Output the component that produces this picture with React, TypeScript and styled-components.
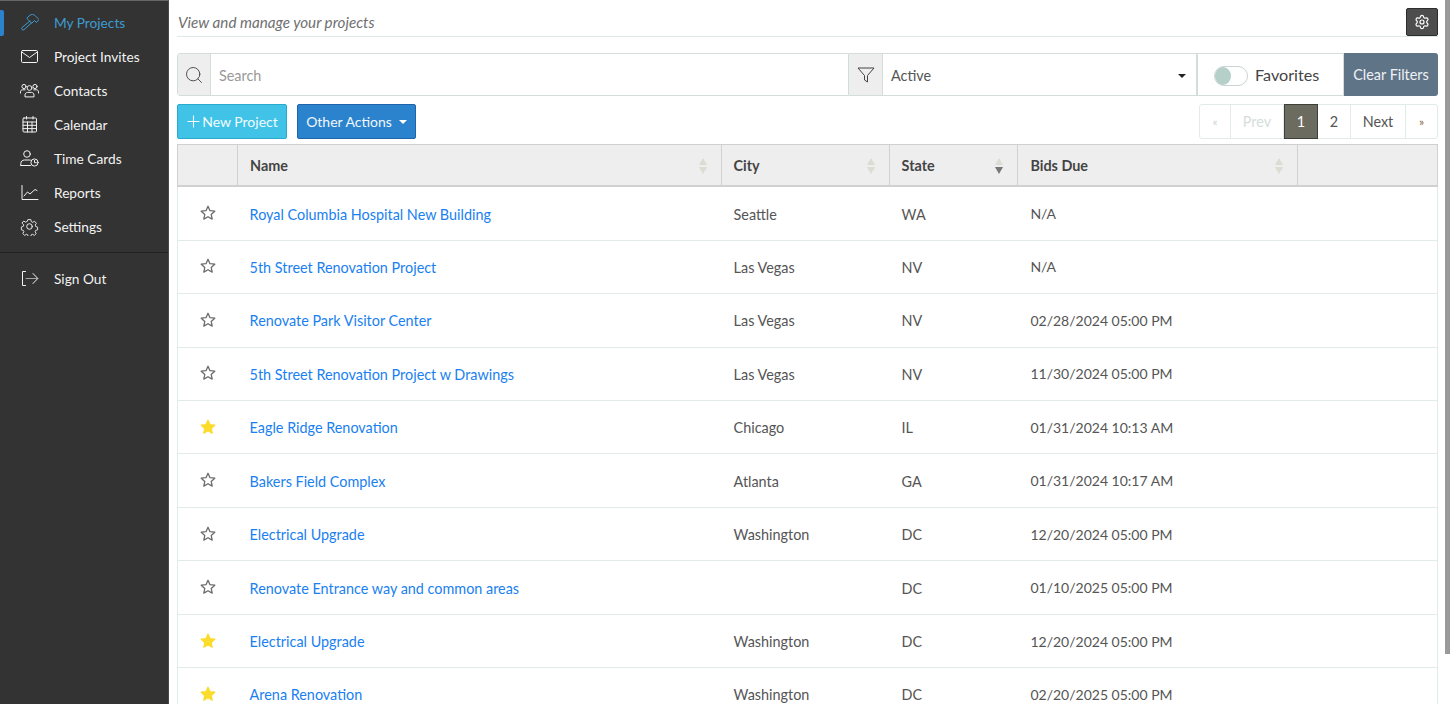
import React from "react";
import styled, { createGlobalStyle } from "styled-components";
import { Settings, Search } from "lucide-react";

const Global = createGlobalStyle`
  html, body { margin: 0; padding: 0; height: 100%; overflow: hidden; background: #fff; }
  body { font-family: Lato, "Liberation Sans", sans-serif; font-size: 14px; color: #444; }
  #root { height: 100vh; }
  * { box-sizing: border-box; }
`;

const Page = styled.div`
  display: flex;
  height: 704px;
  overflow: hidden;
  position: relative;
`;

const Sidebar = styled.nav`
  width: 169px;
  flex: none;
  height: 704px;
  background: #333333;
  border-top: 1px solid #666;
  border-right: 1px solid #4a4a4a;
  padding-top: 4px;
`;

const NavItem = styled.a<{ $active?: boolean }>`
  display: flex;
  align-items: center;
  height: 34px;
  padding-left: 20px;
  gap: 15px;
  color: ${(p) => (p.$active ? "#3d9bd0" : "#f2f2f2")};
  font-size: 13.7px;
  position: relative;
  ${(p) =>
    p.$active &&
    `&::before { content: ""; position: absolute; left: 0; top: 5px; width: 4px; height: 26px; background: #2a83cc; border-radius: 0 2px 2px 0; }`}
`;

const NavIcon = styled.svg`
  width: 19px;
  height: 19px;
  flex: none;
  fill: none;
  stroke: currentColor;
  stroke-width: 1;
  stroke-linecap: round;
  stroke-linejoin: round;
`;

const NavDivider = styled.div`
  border-top: 1px solid #222;
  margin: 9px 0 8px;
`;

const Main = styled.main`
  flex: 1;
  min-width: 0;
  padding: 8px 12px 0 8px;
`;

const TopBar = styled.div`
  display: flex;
  align-items: center;
  justify-content: space-between;
  height: 29px;
  border-bottom: 1px solid #dfe9e6;
`;

const Tagline = styled.span`
  font-style: italic;
  color: #6f6f6f;
  font-size: 15.2px;
  padding: 0 0 1px 1px;
`;

const GearButton = styled.button`
  width: 32px;
  height: 28px;
  background: #4d4d4d;
  border: 1px solid #2d2d2d;
  border-radius: 2px;
  color: #fff;
  display: flex;
  align-items: center;
  justify-content: center;
  padding: 0;
`;

const FilterRow = styled.div`
  display: flex;
  height: 43px;
  margin-top: 16px;
`;

const SearchGroup = styled.div`
  display: flex;
  width: 672px;
  flex: none;
  border: 1px solid #d3dedb;
  border-radius: 3px 0 0 3px;
`;

const SelectGroup = styled.div`
  display: flex;
  width: 348px;
  flex: none;
  border: 1px solid #d3dedb;
  border-left: none;
`;

const Addon = styled.div<{ $width: number }>`
  width: ${(p) => p.$width}px;
  flex: none;
  background: #eeeeee;
  border-right: 1px solid #d3dedb;
  display: flex;
  align-items: center;
  justify-content: center;
  color: #444;
`;

const SearchText = styled.span`
  color: #999;
  font-size: 14.4px;
  padding: 1px 0 0 8px;
  align-self: center;
`;

const SelectBox = styled.div`
  flex: 1;
  display: flex;
  align-items: center;
  justify-content: space-between;
  padding: 2px 10px 0 8px;
  color: #555;
  font-size: 14.4px;
`;

const Caret = styled.span<{ $color: string }>`
  display: inline-block;
  width: 0;
  height: 0;
  border-left: 4px solid transparent;
  border-right: 4px solid transparent;
  border-top: 4px solid ${(p) => p.$color};
`;

const FavoriteBox = styled.div`
  width: 147px;
  flex: none;
  border: 1px solid #d3dedb;
  display: flex;
  align-items: center;
  padding-left: 16px;
  gap: 7px;
  font-size: 16.2px;
  color: #444;
`;

const Toggle = styled.span`
  width: 34px;
  height: 20px;
  border-radius: 10px;
  border: 1px solid #c9d3d1;
  position: relative;
  display: block;
  margin-top: 2px;
  &::after {
    content: "";
    position: absolute;
    left: 0;
    top: 0;
    width: 16px;
    height: 18px;
    border-radius: 50%;
    background: #b5d0c8;
  }
`;

const ClearButton = styled.button`
  width: 94px;
  flex: none;
  background: #607488;
  color: #eef2f5;
  border: none;
  border-radius: 0 3px 3px 0;
  font: inherit;
  font-size: 14.4px;
  padding: 0;
`;

const ActionRow = styled.div`
  display: flex;
  align-items: stretch;
  height: 35px;
  margin-top: 8px;
`;

const NewButton = styled.button`
  background: #41c3e8;
  border: 1px solid #2ba9cc;
  border-radius: 2px;
  color: #f1fbfe;
  width: 110px;
  font: inherit;
  font-size: 14px;
  display: flex;
  align-items: center;
  justify-content: center;
  gap: 0;
  padding: 0;
`;

const PlusIcon = styled.svg`
  width: 16px;
  height: 16px;
  flex: none;
  fill: none;
  stroke: currentColor;
  stroke-width: 1.1;
`;

const OtherButton = styled.button`
  background: #2a83cc;
  border: 1px solid #1f64a8;
  border-radius: 2px;
  color: #f1f7fc;
  width: 119px;
  margin-left: 10px;
  font: inherit;
  font-size: 14px;
  display: flex;
  align-items: center;
  justify-content: center;
  gap: 7px;
  padding: 0;
`;

const Pager = styled.div`
  margin-left: auto;
  display: flex;
  border: 1px solid #e1ebe8;
  border-radius: 3px;
`;

const PageCell = styled.span<{ $w: number; $state?: "off" | "on" }>`
  width: ${(p) => p.$w}px;
  display: flex;
  align-items: center;
  justify-content: center;
  font-size: 14.4px;
  border-right: 1px solid #e1ebe8;
  color: ${(p) => (p.$state === "off" ? "#d5dedb" : p.$state === "on" ? "#fff" : "#555")};
  ${(p) =>
    p.$state === "on" &&
    "background: #6b6b60; outline: 1px solid #3f3f3a; outline-offset: -1px; margin: -1px 0; border: none;"}
  &:last-child { border-right: none; }
`;

const SmallGlyph = styled.span<{ $muted?: boolean }>`
  font-size: 12px;
  color: ${(p) => (p.$muted ? "#ccd6d3" : "#8a6d3b")};
`;

const Table = styled.div`
  margin-top: 5px;
  border-left: 1px solid #e1ebe8;
  border-right: 1px solid #e1ebe8;
`;

const COLS = "60px 483.6px 168px 128.8px 280px 1fr";

const HeadRow = styled.div`
  display: grid;
  grid-template-columns: ${COLS};
  height: 43.3px;
  background: #eeeeee;
  border: 1px solid #d0d0d0;
  border-bottom-width: 2px;
  margin: 0 -1px;
`;

const HeadCell = styled.div`
  display: flex;
  align-items: center;
  justify-content: space-between;
  padding: 1px 13px 0 12px;
  font-weight: 700;
  font-size: 14.4px;
  color: #444;
  border-right: 1px solid #d0d0d0;
  &:last-child { border-right: none; }
`;

const SortIcon = styled.svg`
  width: 10px;
  height: 18px;
  flex: none;
  margin-top: 1px;
`;

const Row = styled.div`
  display: grid;
  grid-template-columns: ${COLS};
  height: 53.44px;
  border-bottom: 1px solid #e1ebe8;
  align-items: center;
  font-size: 14.4px;
  color: #555;
`;

const StarCell = styled.div`
  display: flex;
  justify-content: center;
  margin: -1px 0 0 -1px;
`;

const TextCell = styled.div`
  padding: 1px 12px 0;
  white-space: nowrap;
`;

const NameCell = styled(TextCell)`
  padding-left: 11.6px;
`;

const DateCell = styled(TextCell)`
  font-size: 14px;
  padding-top: 0;
`;

const ProjectLink = styled.a`
  color: #1a7ff0;
`;

const Scrollbar = styled.div`
  position: absolute;
  right: 0;
  top: 0;
  width: 5px;
  height: 654px;
  background: #9a9a9a;
`;

const StarPath = "M8 1.3l2 4.4 4.8.5-3.6 3.2 1 4.7L8 11.7l-4.2 2.4 1-4.7L1.2 6.2 6 5.700z";

const StarIcon = ({ on }: { on: boolean }) => (
  <svg width="16" height="16" viewBox="0 0 16 16">
    <path
      d={StarPath}
      fill={on ? "#fbdc2c" : "none"}
      stroke={on ? "#fbdc2c" : "#6b6b6b"}
      strokeWidth="1.3"
      strokeLinejoin="round"
    />
  </svg>
);

const Sort = ({ down }: { down?: boolean }) => (
  <SortIcon viewBox="0 0 10 18">
    <path d="M5 1 L9 8 H1 Z" fill="#dcdcd4" />
    <path d="M5 17 L9 10 H1 Z" fill={down ? "#777" : "#dcdcd4"} />
  </SortIcon>
);

const navItems: { label: string; icon: React.ReactNode; active?: boolean }[] = [
  {
    label: "My Projects",
    active: true,
    icon: (
      <>
        <path d="M10 8 2 14.500a1.500 1.500 0 0 0 2 2.200L11.500 10" />
        <path d="M7 5 10 2.200c1.500-1 3.500-1 5 .3l4 4-2.500 3-2-2L12 10z" />
      </>
    ),
  },
  {
    label: "Project Invites",
    icon: (
      <>
        <rect x="1.500" y="3.500" width="16" height="12" rx="1.200" />
        <path d="M1.800 5 9.500 10.500 17.200 5" />
      </>
    ),
  },
  {
    label: "Contacts",
    icon: (
      <>
        <circle cx="4" cy="5.500" r="2.100" />
        <circle cx="9.500" cy="7" r="2.400" />
        <circle cx="15" cy="5.500" r="2.100" />
        <path d="M.5 12v-1.200c0-1.300 1-2 2-2h2.700M18.500 12v-1.200c0-1.300-1-2-2-2h-2.700" />
        <path d="M5 15.500V14c0-1.500 1.200-2.600 2.600-2.600h3.800c1.400 0 2.600 1.100 2.600 2.600v1.500z" />
      </>
    ),
  },
  {
    label: "Calendar",
    icon: (
      <>
        <rect x="3" y="3" width="13.500" height="14" rx="1" />
        <path d="M3 7h13.500M3 10.300h13.500M3 13.600h13.500M7.500 7v10M12 7v10M6.500 1.500V4M13 1.500V4" />
      </>
    ),
  },
  {
    label: "Time Cards",
    icon: (
      <>
        <circle cx="7" cy="5" r="3.300" />
        <path d="M.8 16.500v-2c0-2 1.600-3.500 3.500-3.500h5.200c.6 0 1.200.2 1.700.4M.8 16.500h9.700" />
        <circle cx="14.500" cy="13.500" r="3.600" />
        <path d="M14.500 11.500v2.200h1.800" />
      </>
    ),
  },
  {
    label: "Reports",
    icon: (
      <>
        <path d="M2 2.500V16.500H18" />
        <path d="M4 13l3.500-4 2.500 2 5-4.500 2 1" />
      </>
    ),
  },
  {
    label: "Settings",
    icon: (
      <>
        <circle cx="9.500" cy="9.500" r="2.800" />
        <path d="M8 1.800h3l.5 2.300 1.500.7 2.100-1.200 2 2.300-1.300 1.900.5 1.600 2.200.8v2.900l-2.200.7-.6 1.500 1.200 2-2.100 2-1.900-1.200-1.600.6-.5 2.300H8l-.5-2.300-1.500-.6-1.900 1.200-2.100-2 1.200-2-.6-1.500-2.200-.7V10l2.200-.8.500-1.600L1 5.700l2-2.300 2.100 1.200 1.500-.7z" transform="translate(1 1) scale(0.9)" />
      </>
    ),
  },
];

const rows = [
  { name: "Royal Columbia Hospital New Building", city: "Seattle", state: "WA", due: "N/A", fav: false },
  { name: "5th Street Renovation Project", city: "Las Vegas", state: "NV", due: "N/A", fav: false },
  { name: "Renovate Park Visitor Center", city: "Las Vegas", state: "NV", due: "02/28/2024 05:00 PM", fav: false },
  { name: "5th Street Renovation Project w Drawings", city: "Las Vegas", state: "NV", due: "11/30/2024 05:00 PM", fav: false },
  { name: "Eagle Ridge Renovation", city: "Chicago", state: "IL", due: "01/31/2024 10:13 AM", fav: true },
  { name: "Bakers Field Complex", city: "Atlanta", state: "GA", due: "01/31/2024 10:17 AM", fav: false },
  { name: "Electrical Upgrade", city: "Washington", state: "DC", due: "12/20/2024 05:00 PM", fav: false },
  { name: "Renovate Entrance way and common areas", city: "", state: "DC", due: "01/10/2025 05:00 PM", fav: false },
  { name: "Electrical Upgrade", city: "Washington", state: "DC", due: "12/20/2024 05:00 PM", fav: true },
  { name: "Arena Renovation", city: "Washington", state: "DC", due: "02/20/2025 05:00 PM", fav: true },
];

export default function App() {
  return (
    <Page>
      <Global />
      <Sidebar>
        {navItems.map((n) => (
          <NavItem key={n.label} $active={n.active}>
            <NavIcon viewBox="0 0 19 19">{n.icon}</NavIcon>
            {n.label}
          </NavItem>
        ))}
        <NavDivider />
        <NavItem>
          <NavIcon viewBox="0 0 19 19">
            <path d="M5.500 2.500H2.500V16.500H5.500" />
            <path d="M6 9.500H17.500" strokeOpacity="0.6" />
            <path d="M13 4.500l4.800 5-4.800 5" />
          </NavIcon>
          Sign Out
        </NavItem>
      </Sidebar>
      <Main>
        <TopBar>
          <Tagline>View and manage your projects</Tagline>
          <GearButton>
            <Settings size={16} strokeWidth={1.8} />
          </GearButton>
        </TopBar>
        <FilterRow>
          <SearchGroup>
            <Addon $width={33}>
              <Search size={20} strokeWidth={1.1} />
            </Addon>
            <SearchText>Search</SearchText>
          </SearchGroup>
          <SelectGroup>
            <Addon $width={34}>
              <svg width="18" height="18" viewBox="0 0 18 18" fill="none" stroke="#444" strokeWidth="1" strokeLinejoin="round">
                <path d="M1 2H17L10.500 9.500V16L7.500 14V9.500Z" />
              </svg>
            </Addon>
            <SelectBox>
              Active
              <Caret $color="#222" />
            </SelectBox>
          </SelectGroup>
          <FavoriteBox>
            <Toggle />
            Favorites
          </FavoriteBox>
          <ClearButton>Clear Filters</ClearButton>
        </FilterRow>
        <ActionRow>
          <NewButton>
            <PlusIcon viewBox="0 0 16 16">
              <path d="M7.500 1.500V13.500M1.500 7.500H13.500" />
            </PlusIcon>
            New Project
          </NewButton>
          <OtherButton>
            Other Actions
            <Caret $color="#fff" />
          </OtherButton>
          <Pager>
            <PageCell $w={31} $state="off"><SmallGlyph $muted>«</SmallGlyph></PageCell>
            <PageCell $w={53} $state="off">Prev</PageCell>
            <PageCell $w={34} $state="on">1</PageCell>
            <PageCell $w={33}>2</PageCell>
            <PageCell $w={55}>Next</PageCell>
            <PageCell $w={31}><SmallGlyph>»</SmallGlyph></PageCell>
          </Pager>
        </ActionRow>
        <Table>
          <HeadRow>
            <HeadCell />
            <HeadCell>Name<Sort /></HeadCell>
            <HeadCell>City<Sort /></HeadCell>
            <HeadCell>State<Sort down /></HeadCell>
            <HeadCell>Bids Due<Sort /></HeadCell>
            <HeadCell />
          </HeadRow>
          {rows.map((r, i) => (
            <Row key={i}>
              <StarCell><StarIcon on={r.fav} /></StarCell>
              <NameCell><ProjectLink>{r.name}</ProjectLink></NameCell>
              <TextCell>{r.city}</TextCell>
              <TextCell>{r.state}</TextCell>
              <DateCell>{r.due}</DateCell>
              <TextCell />
            </Row>
          ))}
        </Table>
      </Main>
      <Scrollbar />
    </Page>
  );
}
